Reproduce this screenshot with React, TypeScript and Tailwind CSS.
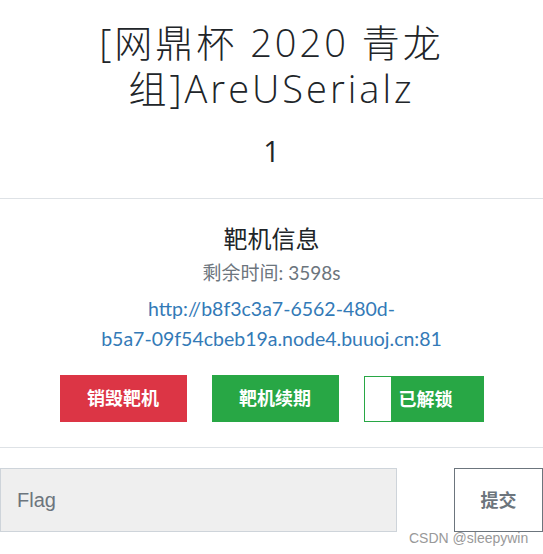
import React from "react";

const cjk = '"Noto Sans CJK SC"';

function ActionButton({ label, tone }: { label: string; tone: "red" | "green" }) {
  const bg = tone === "red" ? "bg-[#dc3545]" : "bg-[#28a745]";
  return (
    <button
      type="button"
      className={`${bg} flex h-[47px] w-[127px] items-center justify-center text-[18px] font-bold text-white`}
    >
      {label}
    </button>
  );
}

export default function App() {
  return (
    <div
      className="relative min-h-screen w-full bg-white text-[#212529]"
      style={{ fontFamily: `Lato, ${cjk}, sans-serif` }}
    >
      <header className="pb-[30px] pt-[19px] text-center" style={{ fontFamily: `"Open Sans", ${cjk}, sans-serif` }}>
        <h1 className="text-[38px] font-light leading-[46px] tracking-[3px]">
          [网鼎杯 2020 青龙
          <br />
          组]AreUSerialz
        </h1>
        <div className="mt-[22px] text-[29px] leading-[35px]">1</div>
      </header>

      <hr className="border-[#dee2e6]" />

      <section className="pb-[25px] pt-[25px] text-center">
        <h2 className="text-[24px] leading-[29px]">靶机信息</h2>
        <p className="mt-[9px] text-[19px] leading-[22px] text-[#6c757d]">剩余时间: 3598s</p>
        <a
          href="#"
          className="mx-auto mt-[10px] block max-w-[470px] text-[19.5px] leading-[30px] text-[#337ab7]"
        >
          http://b8f3c3a7-6562-480d-
          <span className="whitespace-nowrap">b5a7-09f54cbeb19a.node4.buuoj.cn:81</span>
        </a>
        <div className="mt-[21px] flex justify-center gap-[25px]">
          <ActionButton label="销毁靶机" tone="red" />
          <ActionButton label="靶机续期" tone="green" />
          <button
            type="button"
            className="relative mt-px flex h-[46px] w-[120px] items-center justify-center border border-[#28a745] bg-[#28a745] pl-[4px] text-[18px] font-bold text-white"
          >
            <span className="absolute bottom-0 left-0 top-0 w-[26px] bg-white" />
            已解锁
          </button>
        </div>
      </section>

      <hr className="border-[#dee2e6]" />

      <form className="mt-[20px] flex items-start justify-between">
        <input
          placeholder="Flag"
          className="h-[64px] w-[397px] border border-[#ced4da] bg-[#efefef] px-[16px] text-[20px] text-[#495057] placeholder:text-[#6c757d]"
          style={{ fontFamily: '"Liberation Sans", Arial, sans-serif' }}
        />
        <button
          type="button"
          className="h-[64px] w-[89px] border border-[#6c757d] text-[18px] font-bold text-[#6c757d]"
        >
          提交
        </button>
      </form>

      <span
        className="absolute left-[409px] top-[528px] text-[14px] text-[#999999]"
        style={{ fontFamily: '"Liberation Sans", Arial, sans-serif' }}
      >
        CSDN @sleepywin
      </span>
    </div>
  );
}
